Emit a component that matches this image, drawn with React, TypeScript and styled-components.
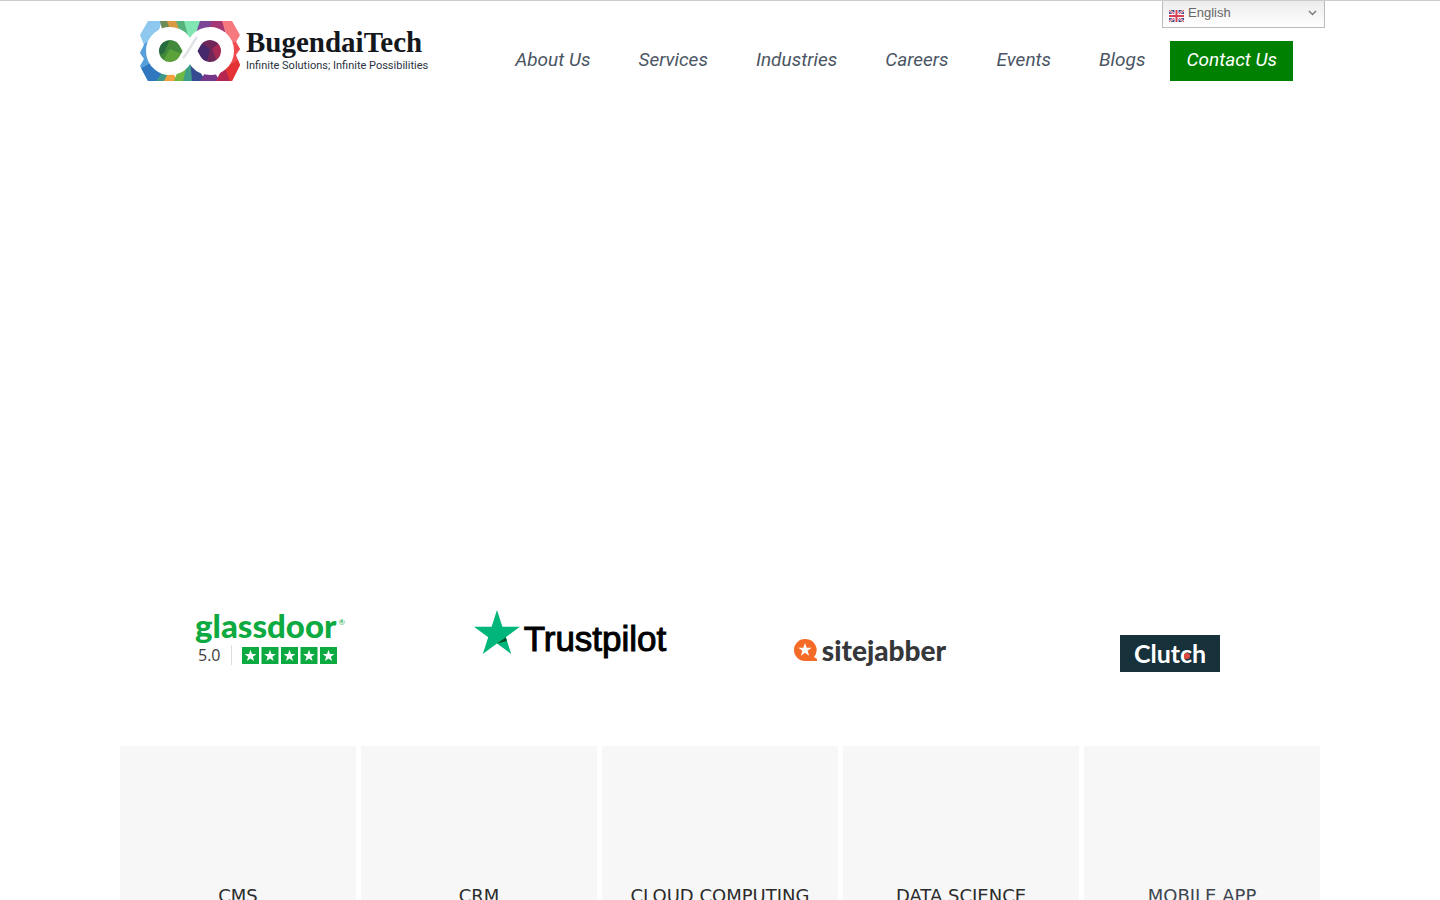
import React from "react";
import styled, { createGlobalStyle } from "styled-components";

const GlobalStyle = createGlobalStyle`
  * { box-sizing: border-box; }
  body {
    margin: 0;
    background: #fff;
    color: #212529;
    font-family: Roboto, "Liberation Sans", sans-serif;
  }
`;

const Page = styled.div`
  position: relative;
  border-top: 1px solid #ccc;
`;

const Container = styled.div`
  max-width: 1200px;
  margin: 0 auto;
`;

const Header = styled(Container).attrs({ as: "header" })`
  display: flex;
  align-items: flex-end;
  justify-content: space-between;
  padding: 20px 27px 0 20px;
`;

const Brand = styled.a`
  display: flex;
  align-items: center;
  gap: 6px;
  color: #14171c;
  text-decoration: none;
`;

const BrandText = styled.span`
  display: flex;
  flex-direction: column;
  padding-bottom: 2px;
`;

const BrandName = styled.span`
  font: 700 29px/32px "Liberation Serif", serif;
`;

const Tagline = styled.span`
  font-size: 11px;
  line-height: 16px;
  color: #2b3340;
`;

const Nav = styled.nav`
  display: flex;
  align-items: center;
  gap: 48px;
`;

const NavLink = styled.a`
  font-size: 19px;
  line-height: 38px;
  height: 40px;
  font-style: italic;
  color: #4b5563;
  text-decoration: none;
  white-space: nowrap;
`;

const ContactLink = styled(NavLink)`
  margin-left: -23px;
  padding: 0 16px;
  background: #008000;
  color: #fff;
`;

const Language = styled.label`
  position: absolute;
  top: 0;
  right: 115px;
  width: 163px;
  height: 27px;
  border: 1px solid #bbb;
  border-top: 0;
  background: linear-gradient(#ececec, #fff);
  display: flex;
  align-items: center;
  padding: 0 7px 0 6px;

  select {
    flex: 1;
    height: 24px;
    margin-bottom: 3px;
    padding: 0 4px;
    border: 0;
    background: none;
    appearance: none;
    color: #666;
    font: 13px/24px "Liberation Sans", sans-serif;
  }
`;

const FlagIcon = styled.svg`
  margin-top: 3px;
`;

const Chevron = styled.svg`
  margin-bottom: 3px;
`;

const Hero = styled.section`
  height: 520px;
`;

const Ratings = styled(Container).attrs({ as: "section" })`
  display: grid;
  grid-template-columns: repeat(4, 1fr);
  justify-items: center;
  height: 145px;
`;

const Glassdoor = styled.div`
  width: 150px;
  padding-top: 6px;
`;

const GlassdoorName = styled.div`
  display: flex;
  align-items: center;
  font: 900 33px/36px Lato, sans-serif;
  color: #0caa41;

  small {
    font-size: 8px;
    font-weight: 400;
    line-height: 8px;
    margin: 0 0 6px 2px;
  }
`;

const Score = styled.div`
  display: flex;
  align-items: center;
  gap: 10px;
  padding-left: 3px;
  height: 24px;
  font: 16px/20px "Open Sans", sans-serif;
  color: #404040;

  svg { border-left: 1px solid #ddd; padding-left: 10px; }
`;

const Wordmark = styled.div`
  display: flex;
  align-items: flex-start;
  gap: 4px;
`;

const Trustpilot = styled(Wordmark)`
  padding-top: 9px;
  font: 400 35px/58px "Liberation Sans", sans-serif;
  -webkit-text-stroke: 1px #000;
  color: #000;
`;

const Sitejabber = styled(Wordmark)`
  padding-top: 37px;
  font: 900 28px/24px Lato, sans-serif;
  color: #36373a;
`;

const Clutch = styled.div`
  margin-top: 34px;
  width: 100px;
  height: 37px;
  background: #17313b;
  color: #fff;
  text-align: center;
  font: 700 25px/37px Lato, sans-serif;
`;

const Letter = styled.span`
  position: relative;

  &::after {
    content: "";
    position: absolute;
    left: 4px;
    bottom: 9px;
    width: 6px;
    height: 6px;
    border-radius: 50%;
    background: #e04840;
  }
`;

const Cards = styled(Container).attrs({ as: "section" })`
  display: grid;
  grid-template-columns: repeat(5, 1fr);
  gap: 5px;
`;

const Card = styled.article<{ $muted?: boolean }>`
  background: #f7f7f7;
  padding: 138px 0 78px;
  text-align: center;

  h2 {
    margin: 0;
    font: 400 18px/24px "DejaVu Sans", sans-serif;
    color: ${(p) => (p.$muted ? "#3f4650" : "#2b2b2b")};
  }
`;

const STAR = "M0-10 2.35-3.24 9.51-3.09 3.8 1.24 5.88 8.09 0 4-5.88 8.09-3.8 1.24-9.51-3.09-2.35-3.24Z";
const LOOP =
  "M54.7 21.5A17.5 17.5 0 1 1 54.7 38.5L45.3 21.5A17.5 17.5 0 1 0 45.3 38.5Z";

function BrandMark() {
  return (
    <svg width="100" height="60" viewBox="0 0 100 60" aria-hidden="true">
      <clipPath id="edge">
        <path d="M8 0H92L100 14 96 21 100 28 96 34 100 44 92 60H8L0 45 4 38 0 32 4 24 0 14Z" />
      </clipPath>
      <g clipPath="url(#edge)">
        <path fill="#8ec8ef" d="M0 0H22L12 30 0 32Z" />
        <path fill="#579fdb" d="M0 26 14 16 20 60H0Z" />
        <path fill="#2f78c0" d="M0 48 14 40 26 60H0Z" />
        <path fill="#6c8c58" d="M20 0H34L24 16Z" />
        <path fill="#d99a45" d="M27 0H38L42 12 33 18Z" />
        <path fill="#55b27b" d="M36 0H54L50 24 42 16Z" />
        <path fill="#82e6b4" d="M44 0H62L50 22Z" />
        <path fill="#7a4695" d="M60 0H74L66 12 54 18Z" />
        <path fill="#a73674" d="M72 0H84L86 20 68 10Z" />
        <path fill="#f6797d" d="M82 0H100V30L90 26Z" />
        <path fill="#ef4b50" d="M90 22 100 20V60H88Z" />
        <path fill="#e43334" d="M86 46 100 38V60H80Z" />
        <path fill="#3c9a8a" d="M16 60 26 46 32 60Z" />
        <path fill="#f3a03e" d="M24 60 30 48 38 60Z" />
        <path fill="#71b943" d="M34 60 40 44 52 38 50 60Z" />
        <path fill="#3d9f87" d="M43 60 49 36 60 60Z" />
        <path fill="#354a91" d="M50 36 66 60H52Z" />
        <path fill="#75378b" d="M60 60 70 44 80 60Z" />
        <path fill="#b4264f" d="M76 60 84 44 90 60Z" />
        <circle cx="30" cy="30" r="14" fill="#43893b" />
        <path fill="#276b3e" d="M16 18H30L24 32 16 36Z" />
        <path fill="#5ba23b" d="M30 28 44 34 32 44 24 38Z" />
        <circle cx="70" cy="30" r="14" fill="#6d2859" />
        <path fill="#46286c" d="M56 18 70 28 66 44 56 40Z" />
        <path fill="#a52a55" d="M72 28 86 16V42L76 38Z" />
      </g>
      <path d={LOOP} fill="none" stroke="#fff" strokeWidth="13" strokeLinejoin="round" />
      <path d="M43 37C48 32 51 24 57 16" fill="none" stroke="#dfe2e6" strokeWidth="2.5" />
    </svg>
  );
}

function Flag() {
  return (
    <FlagIcon width="15" height="12" viewBox="0 0 15 12" aria-hidden="true">
      <path fill="#4a538f" d="M0 0H15V12H0Z" />
      <path stroke="#fff" strokeWidth="2" d="M0 0 15 12M15 0 0 12" />
      <path stroke="#d8475b" d="M0 0 15 12M15 0 0 12" />
      <path stroke="#fff" strokeWidth="4" d="M7.5 0V12M0 6H15" />
      <path stroke="#dc4055" strokeWidth="2" d="M7.5 0V12M0 6H15" />
    </FlagIcon>
  );
}

const links = ["About Us", "Services", "Industries", "Careers", "Events", "Blogs"];
const services = ["CMS", "CRM", "CLOUD COMPUTING", "DATA SCIENCE", "MOBILE APP"];

export default function App() {
  return (
    <Page>
      <GlobalStyle />
      <Header>
        <Brand href="#">
          <BrandMark />
          <BrandText>
            <BrandName>BugendaiTech</BrandName>
            <Tagline>Infinite Solutions; Infinite Possibilities</Tagline>
          </BrandText>
        </Brand>
        <Nav>
          {links.map((label) => (
            <NavLink href="#" key={label}>{label}</NavLink>
          ))}
          <ContactLink href="#">Contact Us</ContactLink>
        </Nav>
      </Header>
      <Language>
        <Flag />
        <select aria-label="Language">
          <option>English</option>
        </select>
        <Chevron width="9" height="6" viewBox="0 0 9 6" fill="none" stroke="#777" aria-hidden="true">
          <path d="M1 1 4.5 4.5 8 1" strokeWidth="1.4" />
        </Chevron>
      </Language>
      <Hero />
      <Ratings>
        <Glassdoor>
          <GlassdoorName>glassdoor<small>®</small></GlassdoorName>
          <Score>
            5.0
            <svg width="106" height="20" viewBox="0 0 95 20" aria-hidden="true">
              {[0, 1, 2, 3, 4].map((i) => (
                <g key={i} transform={`translate(${i * 19.5} 2)`}>
                  <path fill="#0caa41" d="M0 0H17V17H0Z" />
                  <path fill="#fff" transform="translate(8.5 9) scale(.62)" d={STAR} />
                </g>
              ))}
            </svg>
          </Score>
        </Glassdoor>
        <Trustpilot>
          <svg width="46" height="44" viewBox="0 0 46 44" aria-hidden="true">
            <path fill="#00b67a" d="M23 0 28.4 16.8H46L31.8 27.2 37.2 44 23 33.6 8.8 44 14.2 27.2 0 16.8H17.6Z" />
            <path fill="#005128" d="M33 31 31.8 27.2 23 33.6Z" />
          </svg>
          Trustpilot
        </Trustpilot>
        <Sitejabber>
          <svg width="24" height="24" viewBox="0 0 24 24" aria-hidden="true">
            <path fill="#f36b26" d="M11 1A11 11 0 1 0 11 23H23V21L20 19A11 11 0 0 0 11 1Z" />
            <path fill="#fff" transform="translate(11 12) scale(.7)" d={STAR} />
          </svg>
          sitejabber
        </Sitejabber>
        <Clutch>Clut<Letter>c</Letter>h</Clutch>
      </Ratings>
      <Cards>
        {services.map((name) => (
          <Card key={name} $muted={name === "MOBILE APP"}>
            <h2>{name}</h2>
          </Card>
        ))}
      </Cards>
    </Page>
  );
}
